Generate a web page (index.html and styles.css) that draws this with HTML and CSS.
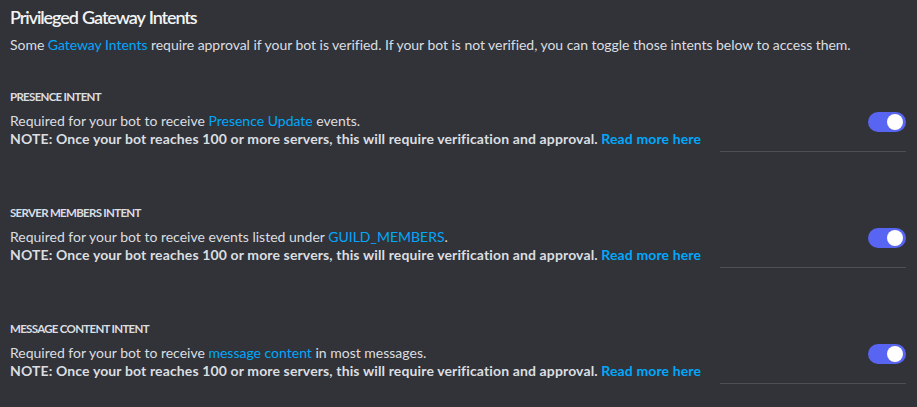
FILE: index.html
```html
<!DOCTYPE html>
<html>
<head>
<meta charset="utf-8">
<link rel="stylesheet" href="styles.css">
</head>
<body>
<div class="page">
  <h2 class="title">Privileged Gateway Intents</h2>
  <p class="subtitle">Some <a class="link">Gateway Intents</a> require approval if your bot is verified. If your bot is not verified, you can toggle those intents below to access them.</p>

  <section class="intent">
    <h3 class="intent-name">PRESENCE INTENT</h3>
    <div class="row">
      <div class="desc">
        <div class="line">Required for your bot to receive <a class="link">Presence Update</a> events.</div>
        <div class="line note">NOTE: Once your bot reaches 100 or more servers, this will require verification and approval. <a class="link">Read more here</a></div>
      </div>
      <div class="toggle"><span class="knob"></span></div>
    </div>
    <div class="divider"></div>
  </section>

  <section class="intent">
    <h3 class="intent-name">SERVER MEMBERS INTENT</h3>
    <div class="row">
      <div class="desc">
        <div class="line">Required for your bot to receive events listed under <a class="link">GUILD_MEMBERS</a>.</div>
        <div class="line note">NOTE: Once your bot reaches 100 or more servers, this will require verification and approval. <a class="link">Read more here</a></div>
      </div>
      <div class="toggle"><span class="knob"></span></div>
    </div>
    <div class="divider"></div>
  </section>

  <section class="intent">
    <h3 class="intent-name">MESSAGE CONTENT INTENT</h3>
    <div class="row">
      <div class="desc">
        <div class="line">Required for your bot to receive <a class="link">message content</a> in most messages.</div>
        <div class="line note">NOTE: Once your bot reaches 100 or more servers, this will require verification and approval. <a class="link">Read more here</a></div>
      </div>
      <div class="toggle"><span class="knob"></span></div>
    </div>
    <div class="divider"></div>
  </section>
</div>
</body>
</html>
```

FILE: styles.css
```css
html, body {
  margin: 0;
  padding: 0;
  background: #313338;
}
body {
  font-family: Lato, "Noto Sans", sans-serif;
  color: #dbdee1;
  width: 917px;
  height: 407px;
  overflow: hidden;
}
.page {
  padding: 5px 11px 0 10px;
}
.title {
  margin: 0;
  font-size: 18px;
  line-height: 24px;
  font-weight: 600;
  letter-spacing: -1.1px;
  word-spacing: 1px;
  color: #f2f3f5;
}
.subtitle {
  margin: 7px 0 0;
  font-size: 14px;
  line-height: 18px;
  letter-spacing: -0.04px;
  white-space: nowrap;
}
.link {
  color: #00a8fc;
  text-decoration: none;
}
.intent {
  margin-top: 35px;
}
.intent + .intent {
  margin-top: 53px;
}
.intent-name {
  margin: 0;
  font-size: 11.5px;
  line-height: 16px;
  font-weight: 700;
  letter-spacing: -0.7px;
  color: #dbdee1;
}
.row {
  margin-top: 7px;
  display: flex;
  justify-content: space-between;
  align-items: flex-start;
}
.line {
  font-size: 14px;
  line-height: 18px;
  white-space: nowrap;
}
.note {
  font-weight: 700;
  letter-spacing: 0.13px;
}
.toggle {
  width: 38px;
  height: 20px;
  border-radius: 10px;
  background: #5865f2;
  position: relative;
  flex: none;
}
.knob {
  position: absolute;
  top: 2px;
  right: 3px;
  width: 16px;
  height: 16px;
  border-radius: 50%;
  background: #ffffff;
}
.divider {
  margin: 3px 0 0 auto;
  width: 186px;
  height: 1px;
  background: #4e5058;
}
```
